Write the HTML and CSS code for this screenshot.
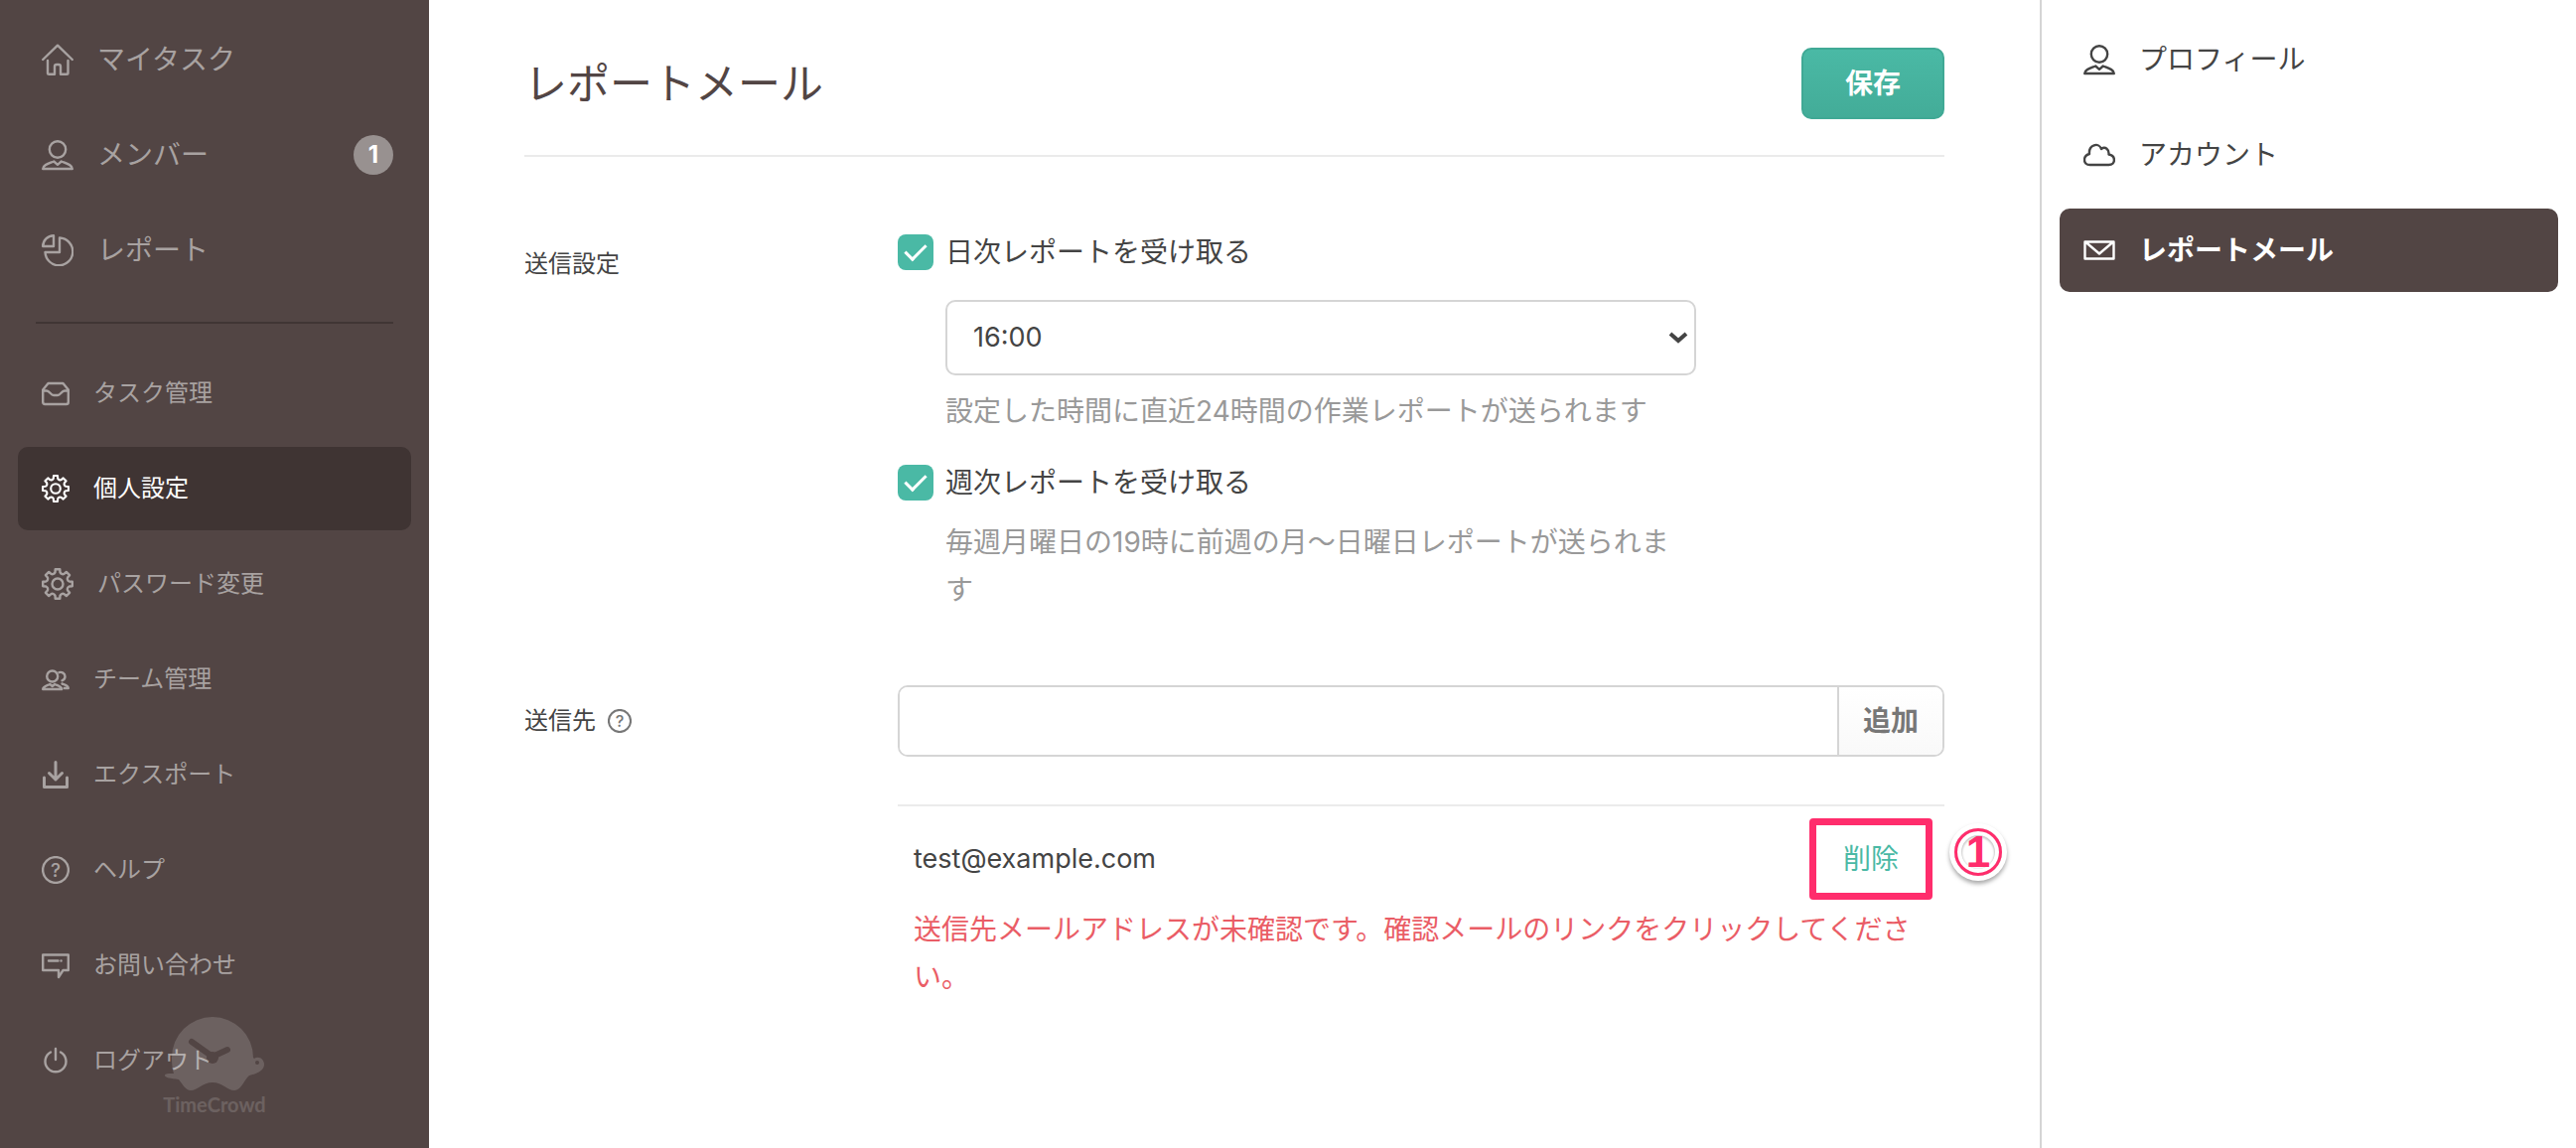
FILE: index.html
```html
<!DOCTYPE html>
<html lang="ja">
<head>
  <meta charset="UTF-8" />
  <meta name="viewport" content="width=device-width, initial-scale=1.0"/>
  <title>レポートメール | TimeCrowd</title>
  <link rel="stylesheet" href="styles.css">
</head>
<body>

  <svg class="sprite" aria-hidden="true">
    <symbol id="icon-home" viewBox="0 0 32 32">
      <path d="M1.200 16 16 1.700 30.800 16M6 17v12.500q0 1.300 1.500 1.300H13v-7.800q0-2 2-2h2q2 0 2 2v7.800h6q1.500 0 1.500-1.300V17"/>
    </symbol>
    <symbol id="icon-user" viewBox="0 0 32 32">
      <circle cx="16" cy="10.500" r="8.200"/>
      <path d="M1.200 30c0-4 6-5.500 11-7.500l3.800 3.300 3.800-3.300c5 2 11 3.500 11 7.500z"/>
    </symbol>
    <symbol id="icon-pie" viewBox="0 0 32 32">
      <path d="M12 12V1.200A10.800 10.800 0 0 0 1.200 12zM18 3.500A13.900 13.900 0 1 1 3.500 18H18z"/>
    </symbol>
    <symbol id="icon-inbox" viewBox="0 0 28 28">
      <path d="M1.200 10.500 6.500 4h15l5.300 6.500V23q0 2-2 2H3.200q-2 0-2-2zM1.200 11.500H5c3 0 4 4.500 7 4.500h4c3 0 4-4.500 7-4.500h3.800"/>
    </symbol>
    <symbol id="icon-gear" viewBox="-16 -16 32 32">
      <circle r="5.500"/>
      <path d="M-2.500-11.700-2.300-14.800H2.300L2.500-11.700A3 3 0 0 0 6.500-10.100L8.800-12.100 12.100-8.800 10.100-6.500A3 3 0 0 0 11.700-2.500L14.800-2.300V2.300L11.700 2.500A3 3 0 0 0 10.100 6.500L12.100 8.800 8.800 12.100 6.500 10.100A3 3 0 0 0 2.500 11.700L2.300 14.800H-2.300L-2.500 11.700A3 3 0 0 0-6.500 10.100L-8.800 12.100-12.100 8.800-10.100 6.500A3 3 0 0 0-11.700 2.500L-14.800 2.300V-2.300L-11.700-2.500A3 3 0 0 0-10.100-6.500L-12.100-8.800-8.800-12.100-6.500-10.100A3 3 0 0 0-2.500-11.700z"/>
    </symbol>
    <symbol id="icon-team" viewBox="0 0 28 28">
      <circle cx="10.700" cy="11" r="5.500"/>
      <path d="M1.200 24c0-2.500 4-3.500 7-5l2.500 2 2.500-2c3 1.500 7 2.500 7 5zM17.500 7.200c2.500-1 6 .8 6 4 0 2-1.200 3.400-3 4.100M20.500 18.500c3 1 6.300 1.700 6.300 4.500h-4"/>
    </symbol>
    <symbol id="icon-download" viewBox="0 0 28 28">
      <path d="M14 1.500V19M7.500 12.500 14 19l6.500-6.500M2.500 17v9.500h23V17"/>
    </symbol>
    <symbol id="icon-help" viewBox="0 0 28 28">
      <circle cx="14" cy="14" r="12.900"/>
      <text x="14" y="20.500">?</text>
    </symbol>
    <symbol id="icon-chat" viewBox="0 0 28 28">
      <path d="M1.200 3.500h25.600V19h-5.300L17 26v-7H1.200zM7 9.500h9.500M19.500 9.500h.1"/>
    </symbol>
    <symbol id="icon-power" viewBox="0 0 28 28">
      <path d="M14 2v11M9 5.500a10.500 10.500 0 1 0 10 0"/>
    </symbol>
    <symbol id="icon-cloud" viewBox="0 0 32 32">
      <path d="M6.500 26c-7 0-7.500-9-.5-11C5 5.500 15.500 3 18 10c4-3 8 .5 7.500 5.500 7.500 1.500 7 10.500 0 10.500z"/>
    </symbol>
    <symbol id="icon-mail" viewBox="0 0 32 32">
      <path d="M1.500 7.500h29v17h-29zM2.500 8 16 19.500 29.500 8"/>
    </symbol>
  </svg>

  <div class="page">
    <nav class="sidebar">
      <ul class="menu menu-large">
        <li><a href="#"><svg class="icon icon-lg"><use href="#icon-home"/></svg><span>マイタスク</span></a></li>
        <li><a href="#"><svg class="icon icon-lg"><use href="#icon-user"/></svg><span>メンバー</span><span class="badge">1</span></a></li>
        <li><a href="#"><svg class="icon icon-lg"><use href="#icon-pie"/></svg><span>レポート</span></a></li>
      </ul>
      <hr>
      <ul class="menu">
        <li><a href="#"><svg class="icon"><use href="#icon-inbox"/></svg><span>タスク管理</span></a></li>
        <li><a href="#" class="active"><svg class="icon"><use href="#icon-gear"/></svg><span>個人設定</span></a></li>
        <li><a href="#"><svg class="icon icon-lg"><use href="#icon-gear"/></svg><span>パスワード変更</span></a></li>
        <li><a href="#"><svg class="icon"><use href="#icon-team"/></svg><span>チーム管理</span></a></li>
        <li><a href="#"><svg class="icon icon-bold"><use href="#icon-download"/></svg><span>エクスポート</span></a></li>
        <li><a href="#"><svg class="icon"><use href="#icon-help"/></svg><span>ヘルプ</span></a></li>
        <li><a href="#"><svg class="icon"><use href="#icon-chat"/></svg><span>お問い合わせ</span></a></li>
        <li><a href="#"><svg class="icon"><use href="#icon-power"/></svg><span>ログアウト</span></a></li>
      </ul>
      <div class="logo">
        <svg viewBox="0 0 100 76">
          <path d="M7 41a41 41 0 0 1 82 0l1 1c4-3 10 0 10 6 0 6-7 9-15 11-5 4-8 15-15 15-7 0-12-8-22-8s-15 8-22 8c-5 0-8-6-12-11C6 62 0 61 0 59s4-2 9-2q-2-6-2-16z"/>
          <path class="logo-hands" d="M27 25 48 40 63 33"/>
          <circle class="logo-dot" cx="48" cy="41" r="6"/>
          <circle class="logo-dot" cx="93" cy="46" r="2"/>
        </svg>
        <span>TimeCrowd</span>
      </div>
    </nav>

    <main class="content">
      <header class="content-header">
        <h1>レポートメール</h1>
        <button class="btn-save" type="submit" form="report-form">保存</button>
      </header>

      <form id="report-form">
        <div class="row">
          <div class="row-label">送信設定</div>
          <div class="row-body">
            <label class="check"><input type="checkbox" checked>日次レポートを受け取る</label>
            <div class="option">
              <div class="select">
                <select aria-label="送信時間">
                  <option>16:00</option>
                </select>
                <svg viewBox="0 0 20 12"><path d="M2 2l8 7 8-7"/></svg>
              </div>
              <p class="note">設定した時間に直近24時間の作業レポートが送られます</p>
            </div>
            <label class="check"><input type="checkbox" checked>週次レポートを受け取る</label>
            <div class="option">
              <p class="note">毎週月曜日の19時に前週の月〜日曜日レポートが送られます</p>
            </div>
          </div>
        </div>

        <div class="row">
          <label class="row-label" for="email">送信先<svg class="icon icon-sm"><use href="#icon-help"/></svg></label>
          <div class="row-body">
            <div class="add-mail">
              <input type="email" id="email">
              <button type="button">追加</button>
            </div>
            <div class="address">
              <div class="address-line">
                <span class="mail">test@example.com</span>
                <span class="delete">
                  <a href="#">削除</a>
                  <span class="marker">1</span>
                </span>
              </div>
              <p class="error">送信先メールアドレスが未確認です。確認メールのリンクをクリックしてください。</p>
            </div>
          </div>
        </div>
      </form>
    </main>

    <aside class="subnav">
      <ul class="menu menu-large">
        <li><a href="#"><svg class="icon icon-lg"><use href="#icon-user"/></svg><span>プロフィール</span></a></li>
        <li><a href="#"><svg class="icon icon-lg"><use href="#icon-cloud"/></svg><span>アカウント</span></a></li>
        <li><a href="#" class="active"><svg class="icon icon-lg"><use href="#icon-mail"/></svg><span>レポートメール</span></a></li>
      </ul>
    </aside>
  </div>

</body>
</html>
```
FILE: styles.css
```css
* {
  box-sizing: border-box;
}

body {
  margin: 0;
  font-family: Inter, "Noto Sans CJK JP", sans-serif;
  font-size: 28px;
  line-height: 48px;
  color: #444;
  background: #fff;
}

a {
  text-decoration: none;
}

ul, p, h1 {
  margin: 0;
  padding: 0;
}

.sprite {
  display: none;
}

.page {
  display: flex;
  min-height: 100vh;
}

/* sidebar */
.sidebar {
  position: relative;
  flex: 0 0 432px;
  padding: 18px;
  background: #524544;
}

.sidebar hr {
  height: 2px;
  margin: 30px 18px 28px;
  border: none;
  background: #403534;
}

.menu {
  display: flex;
  flex-direction: column;
  gap: 12px;
  list-style: none;
  font-size: 24px;
}

.menu-large {
  font-size: 28px;
}

.menu a {
  display: flex;
  align-items: center;
  gap: 24px;
  height: 84px;
  padding: 0 18px 0 24px;
  border-radius: 10px;
  color: #a8a2a1;
}

.menu a.active {
  color: #fff;
}

.sidebar a.active {
  background: #3f3433;
}

.icon {
  flex: none;
  width: 28px;
  height: 28px;
  fill: none;
  stroke: currentColor;
  stroke-width: 2.4;
  stroke-linecap: round;
  stroke-linejoin: round;
}

.icon-lg {
  width: 32px;
  height: 32px;
}

.icon-sm {
  width: 24px;
  height: 24px;
}

.icon-bold {
  stroke-width: 3;
}

symbol text {
  fill: currentColor;
  stroke: none;
  font-size: 19px;
  font-weight: 500;
  text-anchor: middle;
}

.badge {
  width: 40px;
  height: 40px;
  margin-left: auto;
  border-radius: 50%;
  background: #989190;
  color: #fff;
  font-size: 24px;
  font-weight: bold;
  line-height: 40px;
  text-align: center;
}

.logo {
  position: absolute;
  bottom: 32px;
  left: 0;
  width: 100%;
  display: flex;
  flex-direction: column;
  align-items: center;
  color: #fff;
  opacity: 0.15;
  font-family: Lato, sans-serif;
  font-size: 20px;
  font-weight: bold;
  line-height: 24px;
  pointer-events: none;
}

.logo svg {
  width: 100px;
  height: 76px;
  fill: currentColor;
}

.logo .logo-hands {
  fill: none;
  stroke: #524544;
  stroke-width: 6;
  stroke-linecap: round;
}

.logo .logo-dot {
  fill: #524544;
}

/* main column */
.content {
  flex: 1;
  padding: 0 96px;
}

.content-header {
  display: flex;
  justify-content: space-between;
  align-items: center;
  padding: 48px 0 36px;
  border-bottom: 2px solid #ebebeb;
}

.content-header h1 {
  font-size: 43px;
  font-weight: normal;
  color: #524544;
}

.btn-save {
  width: 144px;
  height: 72px;
  border: 2px solid #40a995;
  border-radius: 10px;
  background: linear-gradient(#4ab9a5, #43ac98);
  color: #fff;
  font: inherit;
  font-weight: bold;
}

.row {
  display: flex;
  margin-top: 72px;
}

.row-label {
  display: flex;
  align-items: center;
  gap: 12px;
  flex: 0 0 376px;
  height: 72px;
  font-size: 24px;
}

.row-label .icon {
  color: #777;
}

.row-body {
  flex: 1;
}

.check {
  display: flex;
  align-items: center;
  gap: 12px;
  height: 48px;
}

.check input {
  appearance: none;
  display: grid;
  place-items: center;
  width: 36px;
  height: 36px;
  margin: 0;
  border-radius: 8px;
  background: #4ab9a5;
}

.check input::after {
  content: "";
  width: 9px;
  height: 18px;
  margin-top: -5px;
  border: solid #fff;
  border-width: 0 3px 3px 0;
  transform: rotate(45deg);
}

.option {
  width: 756px;
  margin: 12px 0 24px 48px;
}

.option:last-child {
  margin-bottom: 0;
}

.select {
  position: relative;
  padding: 12px 0;
}

.select select {
  appearance: none;
  display: block;
  width: 100%;
  height: 76px;
  padding: 0 26px;
  border: 2px solid #d5d5d5;
  border-radius: 10px;
  background: #fff;
  color: #444;
  font: inherit;
  font-size: 27px;
}

.select svg {
  position: absolute;
  top: 44px;
  right: 8px;
  width: 20px;
  height: 12px;
  fill: none;
  stroke: #444;
  stroke-width: 4;
  pointer-events: none;
}

.note {
  color: #999;
}

.add-mail {
  display: flex;
  height: 72px;
  border: 2px solid #d5d5d5;
  border-radius: 10px;
  overflow: hidden;
}

.add-mail input {
  flex: 1;
  padding: 0 24px;
  border: none;
  font: inherit;
}

.add-mail button {
  width: 106px;
  border: none;
  border-left: 2px solid #d5d5d5;
  background: linear-gradient(#fff, #f9f9f9);
  color: #777;
  font: inherit;
  font-weight: bold;
}

.address {
  margin-top: 48px;
  padding: 12px 16px;
  border-top: 2px solid #ebebeb;
}

.address-line {
  display: flex;
  justify-content: space-between;
  align-items: center;
}

.mail {
  font-size: 27px;
}

.delete {
  position: relative;
  display: flex;
  margin-right: -4px;
  padding: 10px 27px;
  border: 7px solid #ff2d6c;
  border-radius: 4px;
}

.delete a {
  color: #4ab9a5;
}

.marker {
  position: absolute;
  top: 3px;
  left: 139px;
  width: 48px;
  height: 48px;
  border: 3px solid #ff2d6c;
  border-radius: 50%;
  box-shadow: 0 0 0 5px #fff, 0 3px 4px 5px #aaa, inset 0 0 0 4px #fff, inset 0 1px 2px 5px #ccc;
  color: #ff2d6c;
  font-family: "Liberation Sans", sans-serif;
  font-size: 44px;
  font-weight: bold;
  line-height: 42px;
  text-align: center;
}

.error {
  margin-top: 6px;
  color: #ea5d66;
}

/* right column */
.subnav {
  flex: 0 0 540px;
  padding: 18px;
  border-left: 2px solid #d5d5d5;
}

.subnav .menu a {
  color: #444;
}

.subnav .menu a.active {
  background: #524544;
  color: #fff;
  font-weight: bold;
}
```
